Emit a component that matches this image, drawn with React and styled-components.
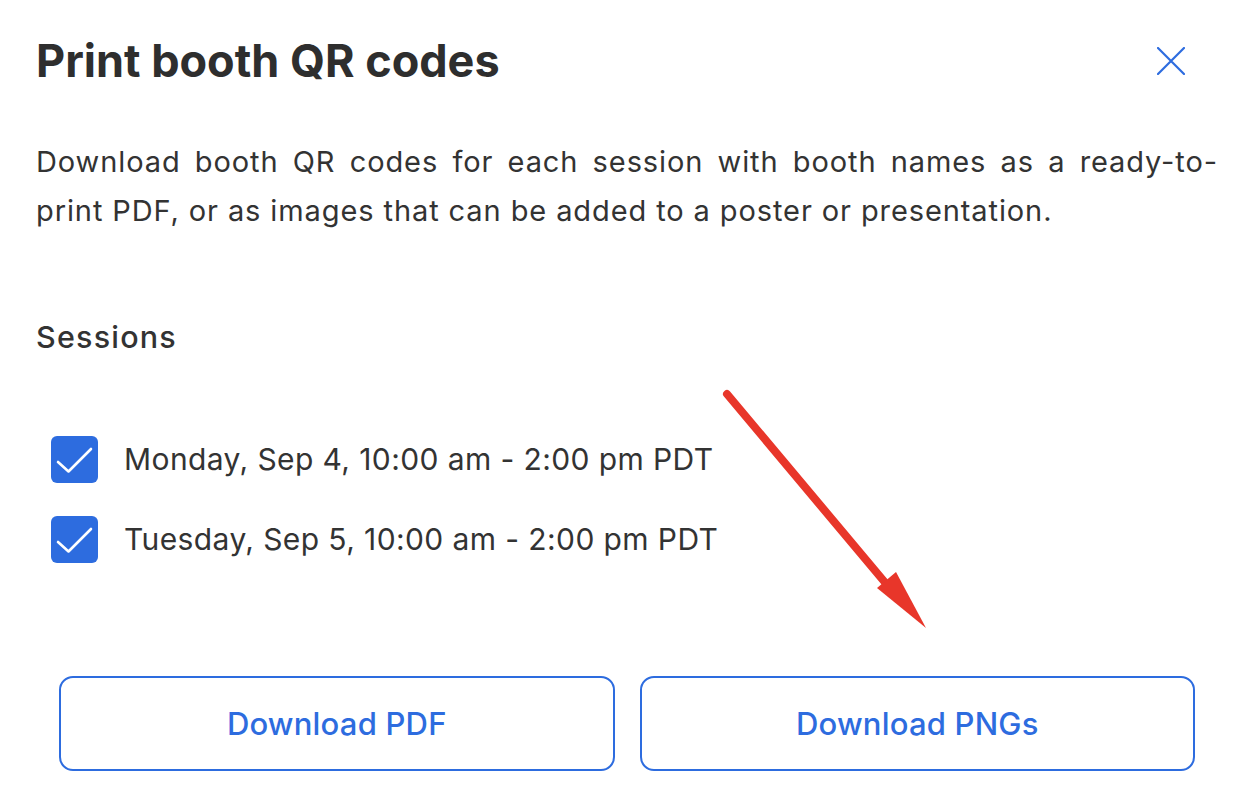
import React from "react";
import styled, { createGlobalStyle } from "styled-components";

const Global = createGlobalStyle`
  html, body { margin: 0; padding: 0; background: #fff; }
  body { font-family: Inter, "Noto Sans", sans-serif; color: #333; }
`;

const Page = styled.div`
  position: relative;
  width: 1254px;
  height: 812px;
  box-sizing: border-box;
  padding: 32px 36px 0 36px;
  display: flex;
  flex-direction: column;
`;

const Header = styled.div`
  display: flex;
  align-items: center;
  justify-content: space-between;
`;

const Title = styled.h1`
  margin: 0;
  font-size: 45px;
  font-weight: 700;
  line-height: 58px;
  color: #2e2e2e;
  letter-spacing: 0px;
`;

const CloseButton = styled.button`
  border: 0;
  background: none;
  padding: 0;
  margin-right: 32px;
  width: 30px;
  height: 30px;
  display: flex;
  align-items: center;
  justify-content: center;
  cursor: pointer;
`;

const Description = styled.p`
  margin: 47px 0 0 0;
  font-size: 29px;
  letter-spacing: 0.9px;
  line-height: 49px;
  text-align: justify;
  color: #333;
`;

const SectionLabel = styled.h2`
  margin: 82px 0 0 0;
  font-size: 30.5px;
  font-weight: 500;
  letter-spacing: 1.2px;
  line-height: 40px;
  color: #333;
`;

const SessionList = styled.div`
  margin-top: 79px;
  padding-left: 15px;
  display: flex;
  flex-direction: column;
  gap: 33px;
`;

const SessionRow = styled.label`
  display: flex;
  align-items: center;
  gap: 26px;
  font-size: 30px;
  letter-spacing: 0.4px;
  line-height: 47px;
  color: #333;
`;

const Box = styled.span`
  width: 47px;
  height: 47px;
  border-radius: 6px;
  background: ${(p) => (p.$checked ? "#2d6cdf" : "#fff")};
  display: flex;
  flex-shrink: 0;
`;

const Actions = styled.div`
  margin-top: 113px;
  padding: 0 23px;
  display: grid;
  grid-template-columns: 1fr 1fr;
  gap: 25px;
`;

const OutlineButton = styled.button`
  height: 95px;
  box-sizing: border-box;
  border: 2px solid #2d6cdf;
  border-radius: 14px;
  background: #fff;
  color: #2d6cdf;
  font-family: Inter, "Noto Sans", sans-serif;
  font-size: 31px;
  font-weight: 500;
  letter-spacing: 0.2px;
  cursor: pointer;
`;

const Annotation = styled.svg`
  position: absolute;
  left: 0;
  top: 0;
  pointer-events: none;
`;

const Check = () => (
  <svg width="47" height="47" viewBox="0 0 47 47">
    <path d="M7 26 L17.5 35.5 L40 13" fill="none" stroke="#fff" strokeWidth="2.6" strokeLinecap="round" strokeLinejoin="round" />
  </svg>
);

const sessions = [
  "Monday, Sep 4, 10:00 am - 2:00 pm PDT",
  "Tuesday, Sep 5, 10:00 am - 2:00 pm PDT",
];

export default function App() {
  return (
    <>
      <Global />
      <Page>
        <Header>
          <Title>Print booth QR codes</Title>
          <CloseButton aria-label="Close">
            <svg width="28" height="28" viewBox="0 0 28 28">
              <path d="M1 1 L27 27 M27 1 L1 27" stroke="#2d6cdf" strokeWidth="2.2" strokeLinecap="round" />
            </svg>
          </CloseButton>
        </Header>
        <Description>
          Download booth QR codes for each session with booth names as a ready-to-print PDF, or as images that can be added to a poster or presentation.
        </Description>
        <SectionLabel>Sessions</SectionLabel>
        <SessionList>
          {sessions.map((s) => (
            <SessionRow key={s}>
              <Box $checked>
                <Check />
              </Box>
              {s}
            </SessionRow>
          ))}
        </SessionList>
        <Actions>
          <OutlineButton>Download PDF</OutlineButton>
          <OutlineButton>Download PNGs</OutlineButton>
        </Actions>
        <Annotation width="1254" height="812" viewBox="0 0 1254 812">
          <line x1="727" y1="394" x2="893" y2="592" stroke="#e8362a" strokeWidth="8" strokeLinecap="round" />
          <polygon points="877,588 896,572 926,628" fill="#e8362a" />
        </Annotation>
      </Page>
    </>
  );
}
